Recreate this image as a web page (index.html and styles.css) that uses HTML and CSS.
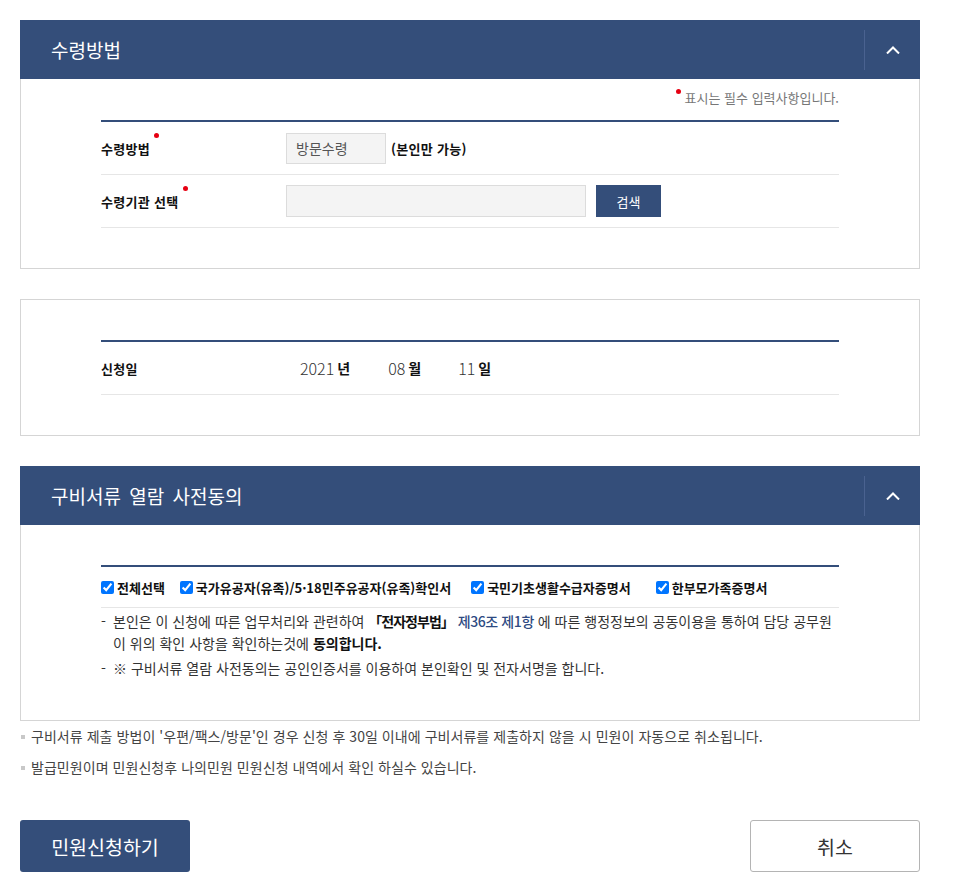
FILE: index.html
```html
<!DOCTYPE html>
<html lang="ko">
<head>
<meta charset="utf-8">
<title>수령방법</title>
<link rel="stylesheet" href="styles.css">
</head>
<body>
<div class="wrap">
  <section class="panel">
    <div class="panel-head">
      <h2 class="panel-title">수령방법</h2>
      <button class="toggle" type="button" aria-label="접기">
        <svg width="14" height="8" viewBox="0 0 14 8"><path d="M1 7.5 L7 1.5 L13 7.5" fill="none" stroke="#fff" stroke-width="2"/></svg>
      </button>
    </div>
    <div class="panel-body body-req">
      <p class="req-note"><span class="dot dot-note"></span>표시는 필수 입력사항입니다.</p>
      <div class="form-table">
        <div class="row">
          <div class="label"><span class="req">수령방법</span></div>
          <div class="value">
            <span class="readonly">방문수령</span>
            <strong class="strong-note">(본인만 가능)</strong>
          </div>
        </div>
        <div class="row">
          <div class="label"><span class="req">수령기관 선택</span></div>
          <div class="value">
            <span class="input-wide"></span>
            <button class="btn-search" type="button">검색</button>
          </div>
        </div>
      </div>
    </div>
  </section>

  <section class="panel box-date">
    <div class="form-table">
      <div class="row">
        <div class="label">신청일</div>
        <div class="value date">
          <span class="num n-year">2021</span><b class="unit">년</b>
          <span class="num n-month">08</span><b class="unit">월</b>
          <span class="num n-day">11</span><b class="unit">일</b>
        </div>
      </div>
    </div>
  </section>

  <section class="panel">
    <div class="panel-head">
      <h2 class="panel-title">구비서류 열람 사전동의</h2>
      <button class="toggle" type="button" aria-label="접기">
        <svg width="14" height="8" viewBox="0 0 14 8"><path d="M1 7.5 L7 1.5 L13 7.5" fill="none" stroke="#fff" stroke-width="2"/></svg>
      </button>
    </div>
    <div class="panel-body body-agree">
      <div class="form-table">
        <div class="checks">
          <label class="chk c1"><input type="checkbox" checked>전체선택</label>
          <label class="chk c2"><input type="checkbox" checked>국가유공자(유족)/5·18민주유공자(유족)확인서</label>
          <label class="chk c3"><input type="checkbox" checked>국민기초생활수급자증명서</label>
          <label class="chk c4"><input type="checkbox" checked>한부모가족증명서</label>
        </div>
        <ul class="agree-list">
          <li>본인은 이 신청에 따른 업무처리와 관련하여 <b class="law">「전자정부법」</b> <span class="article">제36조 제1항</span> 에 따른 행정정보의 공동이용을 통하여 담당 공무원이 위의 확인 사항을 확인하는것에 <b>동의합니다.</b></li>
          <li>※ 구비서류 열람 사전동의는 공인인증서를 이용하여 본인확인 및 전자서명을 합니다.</li>
        </ul>
      </div>
    </div>
  </section>

  <ul class="notes">
    <li>구비서류 제출 방법이 '우편/팩스/방문'인 경우 신청 후 30일 이내에 구비서류를 제출하지 않을 시 민원이 자동으로 취소됩니다.</li>
    <li>발급민원이며 민원신청후 나의민원 민원신청 내역에서 확인 하실수 있습니다.</li>
  </ul>

  <div class="actions">
    <button class="btn-primary" type="button">민원신청하기</button>
    <button class="btn-cancel" type="button">취소</button>
  </div>
</div>
</body>
</html>
```

FILE: styles.css
```css
* { box-sizing: border-box; }
html, body { margin: 0; padding: 0; background: #fff; }
body {
  font-family: "Noto Sans CJK KR", "Noto Sans", sans-serif;
  font-size: 13px;
  color: #333;
}
.wrap {
  width: 900px;
  margin: 20px 0 0 20px;
}
.panel { margin: 0 0 30px; }
.panel-head {
  height: 59px;
  background: #344e7a;
  display: flex;
  align-items: center;
  justify-content: space-between;
}
.panel-title {
  margin: 0 0 0 31px;
  font-size: 19px;
  font-weight: 400;
  color: #fff;
  line-height: 1;
  word-spacing: 3px;
}
.toggle {
  width: 56px;
  height: 40px;
  border: 0;
  border-left: 1px solid #4a6290;
  background: transparent;
  padding: 0;
  display: flex;
  align-items: center;
  justify-content: center;
}
.panel-body {
  border: 1px solid #d5d5d5;
  border-top: 0;
  padding: 0 80px;
}
.body-req { padding-top: 8px; padding-bottom: 40px; }
.req-note {
  margin: 0 0 12px;
  text-align: right;
  font-size: 13px;
  color: #777;
  line-height: 21px;
}
.dot {
  display: inline-block;
  width: 5px;
  height: 5px;
  border-radius: 50%;
  background: #e60012;
}
.dot-note { vertical-align: top; margin: 2px 4px 0 0; }
.form-table { border-top: 2px solid #344e7a; }
.row {
  display: flex;
  align-items: center;
  height: 53px;
  border-bottom: 1px solid #e6e6e6;
}
.label {
  width: 185px;
  font-weight: 700;
  color: #111;
  font-size: 13px;
  letter-spacing: 0.3px;
}
.req { position: relative; }
.req::after {
  content: "";
  position: absolute;
  right: -9px;
  top: -6px;
  width: 5px;
  height: 5px;
  border-radius: 50%;
  background: #e60012;
}
.value { display: flex; align-items: center; }
.readonly {
  width: 100px;
  height: 31px;
  background: #f4f4f4;
  border: 1px solid #dcdcdc;
  font-size: 14px;
  color: #555;
  line-height: 29px;
  padding-left: 9px;
}
.strong-note {
  margin-left: 5px;
  color: #111;
  font-size: 13px;
  letter-spacing: 0.3px;
}
.input-wide {
  width: 300px;
  height: 32px;
  background: #f4f4f4;
  border: 1px solid #dcdcdc;
}
.btn-search {
  margin-left: 10px;
  width: 65px;
  height: 32px;
  border: 0;
  background: #344e7a;
  color: #fff;
  font-family: inherit;
  font-size: 13px;
  padding: 0;
}
.box-date {
  border: 1px solid #d5d5d5;
  padding: 40px 80px 40px;
}
.date { font-size: 16px; color: #333; font-weight: 300; }
.num { display: inline-block; }
.n-year { margin-left: 14px; }
.n-month { margin-left: 38px; }
.n-day { margin-left: 37px; }
.unit { font-size: 14px; color: #111; margin-left: 3px; font-weight: 700; }
.body-agree { padding-top: 40px; padding-bottom: 38px; }
.checks {
  display: flex;
  align-items: center;
  height: 41px;
  border-bottom: 1px solid #e6e6e6;
}
.chk {
  display: inline-flex;
  align-items: center;
  font-weight: 700;
  color: #111;
  font-size: 13px;
}
.chk input {
  width: 13px;
  height: 13px;
  margin: 0 3px 0 0;
  accent-color: #0075ff;
}
.c1 { margin-right: 15px; }
.c2 { margin-right: 20px; }
.c3 { margin-right: 25px; }
.agree-list {
  list-style: none;
  margin: 0;
  padding: 2px 0 0;
}
.agree-list li {
  position: relative;
  padding-left: 12px;
  line-height: 22px;
  margin-bottom: 3px;
  color: #333;
  font-size: 14px;
}
.agree-list li::before {
  content: "-";
  position: absolute;
  left: 0;
  top: 0;
}
.agree-list b { color: #111; }
.law { letter-spacing: -1px; }
.article { color: #2e4a82; font-weight: 500; letter-spacing: -0.4px; }
.notes {
  list-style: none;
  margin: -30px 0 0;
  padding: 0;
}
.notes li {
  position: relative;
  padding-left: 11px;
  line-height: 31px;
  font-size: 14px;
  color: #444;
  letter-spacing: 0.05px;
}
.notes li::before {
  content: "";
  position: absolute;
  left: 1px;
  top: 14px;
  width: 4px;
  height: 4px;
  background: #c8c8c8;
}
.actions {
  display: flex;
  justify-content: space-between;
  margin-top: 37px;
}
.actions button {
  width: 170px;
  height: 52px;
  border-radius: 3px;
  font-family: inherit;
  font-size: 19.5px;
  padding: 0;
}
.btn-primary {
  background: #344e7a;
  color: #fff;
  border: 0;
}
.btn-cancel {
  background: #fff;
  color: #333;
  border: 1px solid #b4b4b4;
}
```
